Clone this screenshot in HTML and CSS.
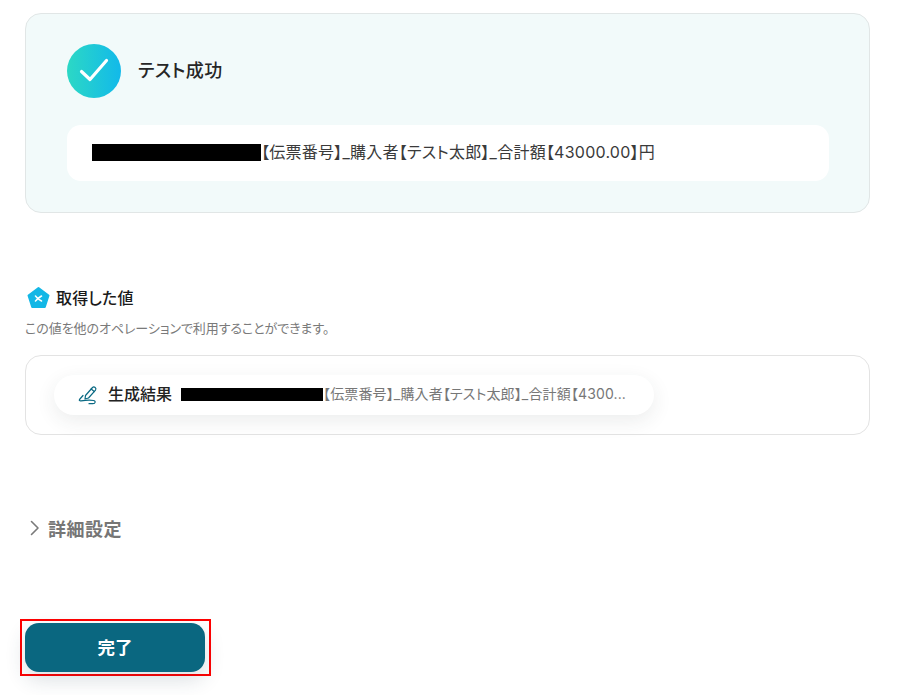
FILE: index.html
```html
<!DOCTYPE html>
<html lang="ja">
<head>
<meta charset="utf-8">
<title>テスト成功</title>
<link rel="stylesheet" href="styles.css">
</head>
<body>
<main class="page">
  <section class="result-card">
    <div class="result-head">
      <span class="check-circle">
        <svg width="30" height="30" viewBox="0 0 30 30" fill="none"><path d="M2.500 15.500 L11 23.500 L27.500 4.500" stroke="#fff" stroke-width="3.200" stroke-linecap="round" stroke-linejoin="round"/></svg>
      </span>
      <h2 class="result-title">テスト成功</h2>
    </div>
    <div class="result-box"><span class="mask mask-a"></span><span class="result-text">【伝票番号】_購入者【テスト太郎】_合計額【43000.00】円</span></div>
  </section>

  <section class="values">
    <div class="values-head">
      <svg class="penta" width="24" height="24" viewBox="0 0 24 24"><path d="M12.500 2 L22.500 9.500 L18.800 21 H6.200 L2.500 9.500 Z" fill="#13b7e6" stroke="#13b7e6" stroke-width="2" stroke-linejoin="round"/><path d="M9.500 10 C11 11.500 13 14 15.500 15 M15.500 10 C13.500 11 11.500 13 9.500 15" stroke="#fff" stroke-width="1.600" stroke-linecap="round" fill="none"/></svg>
      <h3 class="values-title">取得した値</h3>
    </div>
    <p class="values-note">この値を他のオペレーションで利用することができます。</p>
    <div class="values-box">
      <div class="pill">
        <svg class="pen" width="20" height="20" viewBox="0 0 20 20" fill="none" stroke="#0b6a84" stroke-width="1.200" stroke-linecap="round" stroke-linejoin="round"><path d="M7.500 10.500 L14.500 2.500 a2 2 0 0 1 3 2.600 L10.500 13 L7 14 Z"/><path d="M13.200 4 L16.200 6.500"/><path d="M5 10.500 L1.500 14.500 c-.7 1 .3 1.500 1.500 1.300 c4-.5 9-.8 12.500-.3 c2.500 .4 2 3.200 -.5 3.200 h-4"/></svg>
        <span class="pill-label">生成結果</span>
        <span class="mask mask-b"></span>
        <span class="pill-value">【伝票番号】_購入者【テスト太郎】_合計額【4300...</span>
      </div>
    </div>
  </section>

  <div class="details">
    <svg width="12" height="18" viewBox="0 0 12 18" fill="none"><path d="M3.500 2.500 L10 9 L3.500 15.500" stroke="#7a7a7a" stroke-width="1.600" stroke-linecap="round" stroke-linejoin="round"/></svg>
    <span>詳細設定</span>
  </div>

  <div class="actions">
    <button class="done" type="button">完了</button>
  </div>
</main>
</body>
</html>
```
FILE: styles.css
```css
* { box-sizing: border-box; }
html, body { margin: 0; padding: 0; background: #fff; height: 695px; overflow: hidden; }
body { font-family: Inter, "Noto Sans CJK JP", "Noto Sans", sans-serif; color: #2b2b2b; font-feature-settings: "palt"; }
.page { padding: 13px 27px 0 25px; }

.result-card {
  height: 200px;
  border: 1px solid #e1e6e6;
  border-radius: 16px;
  background: #f2fafa;
  padding: 30px 40px 0 41px;
}
.result-head { display: flex; align-items: center; gap: 17px; height: 54px; }
.check-circle {
  width: 54px; height: 54px; border-radius: 50%;
  background: linear-gradient(90deg, #2cd8c5, #12b9ea);
  display: flex; align-items: center; justify-content: center;
}
.result-title { margin: 0 0 1px; font-size: 18px; font-weight: 500; line-height: 1; letter-spacing: .025em; color: #262626; }
.result-box {
  margin-top: 27px; height: 56px; border-radius: 14px; background: #fff;
  display: flex; align-items: center; padding-left: 25px;
  font-size: 16px; letter-spacing: .015em; color: #3a3a3a; font-weight: 400;
}
.result-text { margin-bottom: 4px; }
.mask { display: block; background: #000; flex: none; }
.mask-a { width: 169px; height: 17px; margin-bottom: 1px; }
.mask-b { width: 142px; height: 13px; }

.values { margin-top: 73px; }
.values-head { display: flex; align-items: center; gap: 6px; height: 24px; margin-left: 1px; }
.values-title { margin: 0 0 3px; font-size: 16px; font-weight: 500; letter-spacing: .01em; color: #1a1a1a; }
.values-note { margin: 9px 0 0; font-size: 13px; line-height: 18px; letter-spacing: -.005em; color: #7a7a7a; }
.values-box {
  margin-top: 18px; height: 80px; border: 1px solid #e3e3e3; border-radius: 16px;
  background: #fff; padding: 19px 0 0 28px;
}
.pill {
  width: 600px; height: 40px; border-radius: 20px; background: #fff;
  box-shadow: 0 6px 20px rgba(40, 50, 60, .09);
  display: flex; align-items: center; padding-left: 24px;
}
.pen { flex: none; }
.pill-label { margin-left: 10px; font-size: 16px; font-weight: 500; color: #222; white-space: nowrap; margin-bottom: 5px; }
.pill-label + .mask { margin-left: 9px; margin-bottom: 1px; }
.pill-value { font-size: 14px; letter-spacing: .01em; color: #777; white-space: nowrap; margin-bottom: 5px; }

.details {
  margin-top: 81px; display: flex; align-items: center; gap: 8px; height: 24px; margin-left: 3px;
  font-size: 18px; font-weight: 600; letter-spacing: .03em; color: #767676;
}

.actions {
  margin: 79px 0 0 -5px; width: 191px; height: 57px;
  border: 2px solid #f00; padding: 2px 0 0 3px;
}
.done {
  display: block; width: 180px; height: 49px; border: 0; border-radius: 14px;
  background: #0a6780; color: #fff; font: 700 17.500px Inter, "Noto Sans CJK JP", sans-serif;
  padding-bottom: 3px;
  box-shadow: 0 8px 20px rgba(40, 60, 80, .16);
}
```
